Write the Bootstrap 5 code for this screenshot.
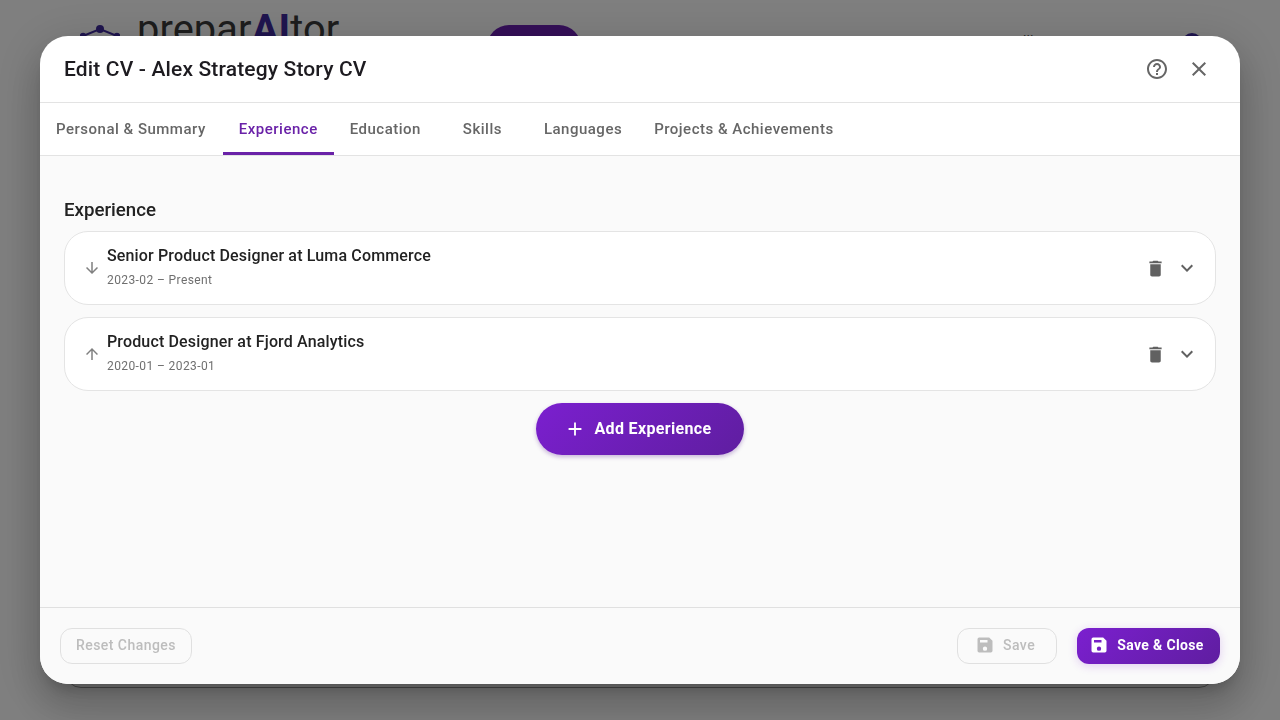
<!DOCTYPE html>
<html lang="en">
<head>
    <meta charset="UTF-8">
    <meta name="viewport" content="width=device-width, initial-scale=1.0">
    <title>Edit CV</title>
    <link href="https://cdn.jsdelivr.net/npm/bootstrap@5.3.0/dist/css/bootstrap.min.css" rel="stylesheet">
    <style>
        html, body { height: 100%; overflow: hidden; }
        body {
            font-family: Roboto, "Liberation Sans", sans-serif;
            background: #fff;
            color: #1f1f1f;
        }
        /* page behind the dialog */
        .page-top { height: 88px; padding: 4px 78px 0 80px; }
        .brand-logo { margin-top: 20px; }
        .brand-name { font-size: 39.8px; line-height: 52px; margin-left: 17px; color: #3a3a3a; letter-spacing: .1px; }
        .brand-name b { color: #3f2a9e; font-weight: 700; }
        .page-btn { width: 94px; height: 44px; margin: 21px 0 0 148px; border-radius: 22px; background: #6a1fb0; }
        .page-avatar { width: 20px; height: 20px; margin-top: 29px; border-radius: 50%; background: #3f2a9e; }
        .page-link-text { font-size: 14px; margin: 27px 105px 0 auto; color: #555; }
        .page-card {
            height: 600px; margin: 0 65px; border: 1px solid #999; border-radius: 16px; background: #fff;
        }
        .scrim { position: fixed; inset: 0; background: rgba(0,0,0,.5); }

        .cv-modal {
            position: fixed; left: 40px; top: 36px; width: 1200px; height: 648px;
            background: #fff; border-radius: 28px; overflow: hidden;
            box-shadow: 0 11px 15px -7px rgba(0,0,0,.2), 0 24px 38px 3px rgba(0,0,0,.14), 0 9px 46px 8px rgba(0,0,0,.12);
        }
        .cv-header { height: 67px; padding: 0 24px; border-bottom: 1px solid #e3e3e3; }
        .cv-title { font-size: 21px; font-weight: 500; line-height: 1; letter-spacing: .15px; color: #1d1b20; margin: 0; }
        .header-tools { margin-right: -4px; }
        .icon-btn { width: 42px; height: 42px; padding: 0; border: 0; background: none; color: #666; }

        .cv-tabs { height: 53px; border-bottom: 1px solid #e3e3e3; }
        .cv-tabs .nav-link {
            height: 52px; min-width: 91px; padding: 3px 16px 0; border: 0; border-radius: 0;
            border-bottom: 3px solid transparent; margin-bottom: -1px;
            font-size: 15px; font-weight: 500; letter-spacing: .5px; color: #666; text-align: center;
        }
        .cv-tabs .nav-link.active { color: #6a22a8; border-bottom-color: #6a22a8; background: none; }
        .cv-tabs .nav-item:first-child .nav-link { margin-right: 1px; }

        .cv-body { height: 451px; padding: 42px 24px 0; background: #fafafa; }
        .section-title { font-size: 18.7px; font-weight: 500; line-height: 24px; color: #222; margin-bottom: 9px; }
        .entry {
            height: 74px; margin-bottom: 12px; padding: 0 16px 0 18px;
            background: #fff; border: 1px solid #e4e4e4; border-radius: 24px;
        }
        .entry-arrow { width: 24px; color: #808080; }
        .entry-text { padding-bottom: 3px; }
        .entry-title { font-size: 16px; font-weight: 500; line-height: 24px; color: #222; letter-spacing: .15px; }
        .entry-dates { font-size: 12px; line-height: 18px; margin-top: 3px; color: #6f6f6f; letter-spacing: .4px; }
        .entry-tools { color: #616161; gap: 9px; }

        .btn-add {
            width: 208px; height: 52px; padding: 0 4px 0 0; border: 0; border-radius: 26px;
            background: linear-gradient(135deg, #7b1fcf 0%, #5f1ea0 100%);
            color: #fff; font-size: 16px; font-weight: 700; letter-spacing: .35px;
            box-shadow: 0 2px 4px rgba(80,20,140,.3);
        }
        .btn-add:hover { color: #fff; }

        .cv-footer { height: 77px; padding: 20px 20px 0; border-top: 1px solid #e0e0e0; background: #fafafa; }
        .footer-right { gap: 20px; }
        .btn-ghost {
            height: 36px; padding: 0 15px 2px; border: 1px solid #e0e0e0; border-radius: 12px;
            background: none; color: #bdbdbd; font-size: 14px; font-weight: 500; letter-spacing: .45px;
        }
        .btn-ghost:disabled { color: #bdbdbd; border-color: #e0e0e0; opacity: 1; }
        .btn-ghost-save { width: 100px; padding: 0 0 2px 17px; }
        .btn-save-close {
            height: 36px; width: 143px; padding: 0 4px 2px 0; border: 0; border-radius: 12px;
            background: linear-gradient(135deg, #7b1fcf 0%, #5f1ea0 100%);
            color: #fff; font-size: 14px; font-weight: 700; letter-spacing: .35px;
            box-shadow: 0 2px 10px rgba(123,31,207,.2);
        }
        .btn-save-close:hover { color: #fff; }
    </style>
</head>
<body>
    <div class="page-top d-flex">
        <svg class="brand-logo" width="40" height="44" viewBox="0 0 40 44" fill="#3f2a9e">
            <circle cx="20" cy="5" r="4"/><circle cx="3" cy="12" r="3.2"/><circle cx="37" cy="12" r="3.2"/>
            <path d="M3 12 20 5 37 12 20 22Z" fill="none" stroke="#3f2a9e" stroke-width="2"/>
        </svg>
        <div class="brand-name">prepar<b>AI</b>tor</div>
        <div class="page-btn"></div>
        <div class="page-link-text">Illustrate</div>
        <div class="page-avatar"></div>
    </div>
    <div class="page-card"></div>
    <div class="scrim"></div>

    <div class="cv-modal d-flex flex-column">
        <div class="cv-header d-flex align-items-center justify-content-between">
            <h2 class="cv-title">Edit CV - Alex Strategy Story CV</h2>
            <div class="header-tools d-flex align-items-center">
                <button type="button" class="icon-btn d-flex align-items-center justify-content-center" aria-label="Help">
                    <svg width="24" height="24" viewBox="0 0 24 24" fill="currentColor"><path d="M11 18h2v-2h-2v2zm1-16C6.48 2 2 6.48 2 12s4.48 10 10 10 10-4.48 10-10S17.52 2 12 2zm0 18c-4.41 0-8-3.59-8-8s3.59-8 8-8 8 3.59 8 8-3.59 8-8 8zm0-14c-2.21 0-4 1.79-4 4h2c0-1.1.9-2 2-2s2 .9 2 2c0 2-3 1.75-3 5h2c0-2.25 3-2.5 3-5 0-2.21-1.79-4-4-4z"/></svg>
                </button>
                <button type="button" class="icon-btn d-flex align-items-center justify-content-center" aria-label="Close">
                    <svg width="24" height="24" viewBox="0 0 24 24" fill="currentColor"><path d="M19 6.41 17.59 5 12 10.59 6.41 5 5 6.41 10.59 12 5 17.59 6.41 19 12 13.41 17.59 19 19 17.59 13.41 12z"/></svg>
                </button>
            </div>
        </div>

        <ul class="nav cv-tabs flex-nowrap">
            <li class="nav-item"><a class="nav-link d-flex align-items-center justify-content-center" href="#">Personal &amp; Summary</a></li>
            <li class="nav-item"><a class="nav-link active d-flex align-items-center justify-content-center" href="#">Experience</a></li>
            <li class="nav-item"><a class="nav-link d-flex align-items-center justify-content-center" href="#">Education</a></li>
            <li class="nav-item"><a class="nav-link d-flex align-items-center justify-content-center" href="#">Skills</a></li>
            <li class="nav-item"><a class="nav-link d-flex align-items-center justify-content-center" href="#">Languages</a></li>
            <li class="nav-item"><a class="nav-link d-flex align-items-center justify-content-center" href="#">Projects &amp; Achievements</a></li>
        </ul>

        <div class="cv-body">
            <div class="section-title">Experience</div>

            <div class="entry d-flex align-items-center">
                <div class="entry-arrow d-flex">
                    <svg width="18" height="18" viewBox="0 0 24 24" fill="currentColor"><path d="m20 12-1.41-1.41L13 16.17V4h-2v12.17l-5.58-5.59L4 12l8 8 8-8z"/></svg>
                </div>
                <div class="entry-text flex-grow-1">
                    <div class="entry-title">Senior Product Designer at Luma Commerce</div>
                    <div class="entry-dates">2023-02 – Present</div>
                </div>
                <div class="entry-tools d-flex align-items-center">
                    <svg width="21" height="21" viewBox="0 0 24 24" fill="currentColor"><path d="M6 19c0 1.1.9 2 2 2h8c1.1 0 2-.9 2-2V7H6v12zM19 4h-3.5l-1-1h-5l-1 1H5v2h14V4z"/></svg>
                    <svg width="24" height="24" viewBox="0 0 24 24" fill="currentColor"><path d="M16.59 8.59 12 13.17 7.41 8.59 6 10l6 6 6-6z"/></svg>
                </div>
            </div>

            <div class="entry d-flex align-items-center">
                <div class="entry-arrow d-flex">
                    <svg width="18" height="18" viewBox="0 0 24 24" fill="currentColor"><path d="m4 12 1.41 1.41L11 7.83V20h2V7.83l5.58 5.59L20 12l-8-8-8 8z"/></svg>
                </div>
                <div class="entry-text flex-grow-1">
                    <div class="entry-title">Product Designer at Fjord Analytics</div>
                    <div class="entry-dates">2020-01 – 2023-01</div>
                </div>
                <div class="entry-tools d-flex align-items-center">
                    <svg width="21" height="21" viewBox="0 0 24 24" fill="currentColor"><path d="M6 19c0 1.1.9 2 2 2h8c1.1 0 2-.9 2-2V7H6v12zM19 4h-3.5l-1-1h-5l-1 1H5v2h14V4z"/></svg>
                    <svg width="24" height="24" viewBox="0 0 24 24" fill="currentColor"><path d="M16.59 8.59 12 13.17 7.41 8.59 6 10l6 6 6-6z"/></svg>
                </div>
            </div>

            <div class="d-flex justify-content-center">
                <button type="button" class="btn btn-add d-flex align-items-center justify-content-center gap-2">
                    <svg width="22" height="22" viewBox="0 0 24 24" fill="currentColor"><path d="M19 13h-6v6h-2v-6H5v-2h6V5h2v6h6v2z"/></svg>
                    Add Experience
                </button>
            </div>
        </div>

        <div class="cv-footer d-flex justify-content-between align-items-start">
            <button type="button" class="btn btn-ghost" disabled>Reset Changes</button>
            <div class="footer-right d-flex flex-shrink-0">
                <button type="button" class="btn btn-ghost btn-ghost-save d-flex align-items-center gap-2" disabled>
                    <svg width="20" height="20" viewBox="0 0 24 24" fill="currentColor" fill-rule="evenodd"><path d="M17 3H5a2 2 0 0 0-2 2v14a2 2 0 0 0 2 2h14a2 2 0 0 0 2-2V7l-4-4zm-5 16a2.6 2.6 0 1 1 0-5.2 2.6 2.6 0 0 1 0 5.2zm3-10H6V6h9v3z"/></svg>
                    Save
                </button>
                <button type="button" class="btn btn-save-close d-flex align-items-center justify-content-center gap-2">
                    <svg width="20" height="20" viewBox="0 0 24 24" fill="currentColor" fill-rule="evenodd"><path d="M17 3H5a2 2 0 0 0-2 2v14a2 2 0 0 0 2 2h14a2 2 0 0 0 2-2V7l-4-4zm-5 16a2.6 2.6 0 1 1 0-5.2 2.6 2.6 0 0 1 0 5.2zm3-10H6V6h9v3z"/></svg>
                    Save &amp; Close
                </button>
            </div>
        </div>
    </div>

    <script src="https://cdn.jsdelivr.net/npm/bootstrap@5.3.0/dist/js/bootstrap.bundle.min.js"></script>
</body>
</html>
